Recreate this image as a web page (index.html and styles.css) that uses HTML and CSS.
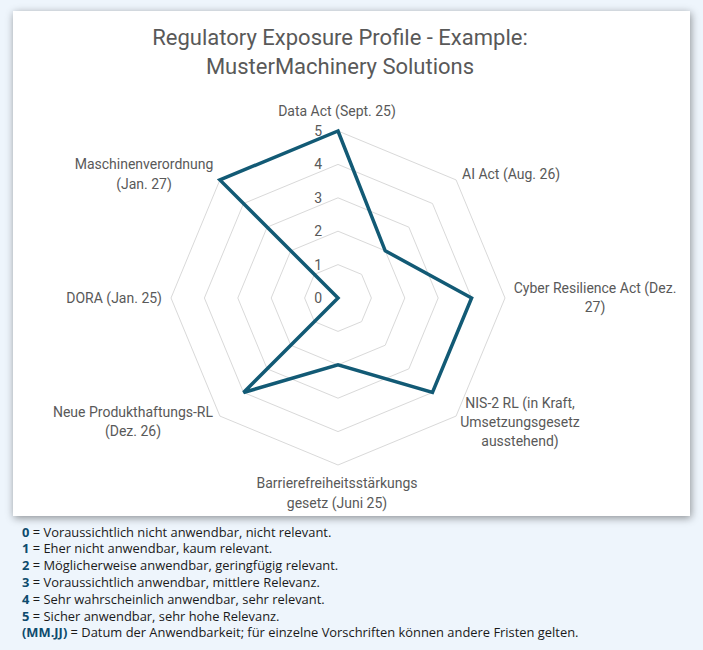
FILE: index.html
```html
<!DOCTYPE html>
<html lang="de">
<head>
<meta charset="utf-8">
<title>Regulatory Exposure Profile</title>
<link rel="stylesheet" href="styles.css">
</head>
<body>
<div class="card">
  <h1 class="title">Regulatory Exposure Profile - Example:<br>MusterMachinery Solutions</h1>
  <svg class="chart" viewBox="13 81 677 435" xmlns="http://www.w3.org/2000/svg">
    <g class="grid">
      <polygon points="338,264.6 361.62,274.38 371.4,298 361.62,321.62 338,331.4 314.38,321.62 304.6,298 314.38,274.38"/>
      <polygon points="338,231.2 385.23,250.77 404.8,298 385.23,345.23 338,364.8 290.77,345.23 271.2,298 290.77,250.77"/>
      <polygon points="338,197.8 408.85,227.15 438.2,298 408.85,368.85 338,398.2 267.15,368.85 237.8,298 267.15,227.15"/>
      <polygon points="338,164.4 432.47,203.53 471.6,298 432.47,392.47 338,431.6 243.53,392.47 204.4,298 243.53,203.53"/>
      <polygon points="338,131 456.09,179.91 505,298 456.09,416.09 338,465 219.91,416.09 171,298 219.91,179.91"/>
    </g>
    <g class="ticks">
      <text x="322" y="303">0</text>
      <text x="322" y="269.6">1</text>
      <text x="322" y="236.2">2</text>
      <text x="322" y="202.8">3</text>
      <text x="322" y="169.4">4</text>
      <text x="322" y="136">5</text>
    </g>
    <polygon class="series" points="338,131 385.23,250.77 471.6,298 432.47,392.47 338,364.8 243.53,392.47 338,298 219.91,179.91"/>
    <g class="labels">
      <text class="mid" x="337" y="116">Data Act (Sept. 25)</text>
      <text class="start" x="462" y="179">AI Act (Aug. 26)</text>
      <text class="mid" x="595" y="293">Cyber Resilience Act (Dez.<tspan x="595" dy="19">27)</tspan></text>
      <text class="mid" x="520" y="408">NIS-2 RL (in Kraft,<tspan x="520" dy="19">Umsetzungsgesetz</tspan><tspan x="520" dy="19">ausstehend)</tspan></text>
      <text class="mid" x="337" y="488">Barrierefreiheitsstärkungs<tspan x="337" dy="20">gesetz (Juni 25)</tspan></text>
      <text class="mid" x="133" y="417">Neue Produkthaftungs-RL<tspan x="133" dy="19">(Dez. 26)</tspan></text>
      <text class="end" x="162" y="303">DORA (Jan. 25)</text>
      <text class="mid" x="144" y="169">Maschinenverordnung<tspan x="144" dy="20">(Jan. 27)</tspan></text>
    </g>
  </svg>
</div>
<ul class="legend">
  <li><b>0</b> = Voraussichtlich nicht anwendbar, nicht relevant.</li>
  <li><b>1</b> = Eher nicht anwendbar, kaum relevant.</li>
  <li><b>2</b> = Möglicherweise anwendbar, geringfügig relevant.</li>
  <li><b>3</b> = Voraussichtlich anwendbar, mittlere Relevanz.</li>
  <li><b>4</b> = Sehr wahrscheinlich anwendbar, sehr relevant.</li>
  <li><b>5</b> = Sicher anwendbar, sehr hohe Relevanz.</li>
  <li><b>(MM.JJ)</b> = Datum der Anwendbarkeit; für einzelne Vorschriften können andere Fristen gelten.</li>
</ul>
</body>
</html>
```

FILE: styles.css
```css
html, body {
  margin: 0;
  padding: 0;
}

body {
  background: #eef5fc;
  font-family: "Open Sans", "Noto Sans", sans-serif;
  overflow: hidden;
}

.card {
  margin: 11px 0 0 13px;
  width: 677px;
  height: 505px;
  background: #ffffff;
  box-shadow: 1px 2px 8px rgba(0, 0, 0, 0.42);
  display: flex;
  flex-direction: column;
}

.title {
  margin: 0;
  padding: 12px 23px 0 0;
  font-family: Roboto, "Liberation Sans", sans-serif;
  font-weight: 400;
  font-size: 22px;
  line-height: 29px;
  color: #595959;
  text-align: center;
}

.chart {
  display: block;
  width: 677px;
  height: 435px;
}

.grid polygon {
  fill: none;
  stroke: #d9d9d9;
  stroke-width: 1;
}

.series {
  fill: none;
  stroke: #125a75;
  stroke-width: 3.5;
  stroke-linejoin: miter;
}

.ticks text,
.labels text {
  font-family: Roboto, "Liberation Sans", sans-serif;
  font-size: 14px;
  fill: #595959;
}

.ticks text {
  text-anchor: end;
}

.labels .mid {
  text-anchor: middle;
}

.labels .start {
  text-anchor: start;
}

.labels .end {
  text-anchor: end;
}

.legend {
  margin: 7.6px 0 0 22px;
  padding: 0;
  list-style: none;
  font-size: 12.9px;
  line-height: 16.8px;
  color: #1a1a1a;
}

.legend b {
  color: #0d4b6d;
  font-weight: 700;
}
```
